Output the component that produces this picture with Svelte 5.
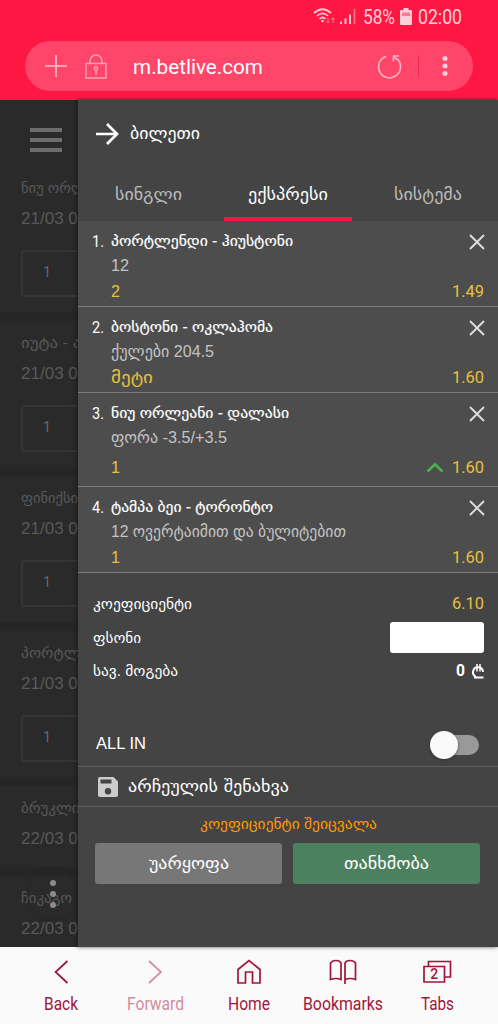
<script>
  const events = [
    { name: 'ნიუ ორლეანი', w: 95, date: '21/03 04:00', box: true },
    { name: 'იუტა - ატლანტა', w: 126, date: '21/03 05:00', box: true },
    { name: 'ფინიქსი', w: 57, date: '21/03 06:00', box: true },
    { name: 'პორტლენდი', w: 96, date: '21/03 06:30', box: true },
    { name: 'ბრუკლინი', w: 74, date: '22/03 03:30', box: false },
    { name: 'ჩიკაგო', w: 51, date: '22/03 04:00', box: false }
  ];
  const tabs = [
    { text: 'სინგლი', w: 67 },
    { text: 'ექსპრესი', w: 80, active: true },
    { text: 'სისტემა', w: 68 }
  ];
  const bets = [
    { title: 'პორტლენდი - ჰიუსტონი', w: 182, sub: '12', sw: 18, pick: '2', pw: 9, odds: '1.49' },
    { title: 'ბოსტონი - ოკლაჰომა', w: 162, sub: 'ქულები 204.5', sw: 103, pick: 'მეტი', pw: 42, odds: '1.60' },
    { title: 'ნიუ ორლეანი - დალასი', w: 178, sub: 'ფორა -3.5/+3.5', sw: 116, pick: '1', pw: 9, odds: '1.60', up: true },
    { title: 'ტამპა ბეი - ტორონტო', w: 162, sub: '12 ოვერტაიმით და ბულიტებით', sw: 235, pick: '1', pw: 9, odds: '1.60' }
  ];
</script>

{#snippet label(text, w, size, cls = '')}
  <svg class="label {cls}" width={w} height="20">
    <text x="0" y="15" font-size={size} textLength={w} lengthAdjust="spacingAndGlyphs">{text}</text>
  </svg>
{/snippet}

<div class="screen">
  <header class="browser">
    <div class="status">
      <svg class="signal" width="46" height="20" viewBox="0 0 46 20" fill="none" stroke="#ffc4cf" stroke-width="1.7">
        <path d="M1 6Q9.5-1.500 18 6M4 9Q9.500 3.800 15 9M6.500 12Q9.500 9 12.500 12" />
        <circle cx="9.500" cy="14" r="1.300" fill="#ffc4cf" stroke="none" />
        <path d="M15 11v5m-1.500-1.500 1.500 1.700 1.500-1.700M20 16v-5m-1.500 1.500 1.500-1.700 1.500 1.700" stroke="#ff7890" stroke-width="1" />
        <path d="M28 17v-2.500M32.500 17v-5.500M37 17V7.500" stroke-width="2" />
        <path d="M41.500 17V2" stroke="#ff7890" stroke-width="1.500" />
      </svg>
      {@render label('58%', 32, 20.5, 'rob')}
      <svg class="battery" width="12" height="18" viewBox="0 0 12 18" fill="#ffd0d9">
        <path d="M3.500 0h5v2H11q1 0 1 1v13q0 1-1 1H1q-1 0-1-1V3q0-1 1-1h2.500z" />
        <path d="M2 4.500h8V8H2z" fill="#ff7890" />
      </svg>
      {@render label('02:00', 44, 20.5, 'rob')}
    </div>
    <div class="address">
      <svg width="22" height="22" viewBox="0 0 22 22" stroke="#ffc4cf" stroke-width="1.600"><path d="M11 0v22M0 11h22" /></svg>
      <svg class="lock" width="22" height="25" viewBox="0 0 22 25" fill="none" stroke="#ff9fb1" stroke-width="1.500">
        <path d="M1 9.500h20v14.500H1zM5 9.500V7a6 6 0 0 1 12 0v2.500" />
        <circle cx="11" cy="14.500" r="1.700" /><path d="M11 16v5" />
      </svg>
      {@render label('m.betlive.com', 130, 21, 'rob url')}
      <svg class="reload" width="25" height="25" viewBox="0 0 25 25" fill="none" stroke="#ffb5c3" stroke-width="1.600">
        <path d="M9 2.400A11 11 0 1 0 20 4.700M22 2h-5.500v5.500M16.500 2l4 4" />
      </svg>
      <i class="split"></i>
      <svg class="more" width="6" height="22" viewBox="0 0 6 22" fill="#ffd0d9"><circle cx="3" cy="3.500" r="2.500" /><circle cx="3" cy="11" r="2.500" /><circle cx="3" cy="18.500" r="2.500" /></svg>
    </div>
  </header>

  <main>
    <aside>
      <div class="menu"><i></i><i></i><i></i></div>
      {#each events as e}
        <div class="event" class:short={!e.box}>
          {@render label(e.name, e.w, 15)}
          {@render label(e.date, 90, 16)}
          {#if e.box}<div class="box">{@render label('1', 8, 15, 'rob')}</div>{/if}
        </div>
      {/each}
      <div class="fab"><i></i><i></i><i></i></div>
    </aside>

    <section class="slip">
      <div class="title">
        <svg width="23" height="22" viewBox="0 0 23 22" fill="none" stroke="#fff" stroke-width="2.700"><path d="M0 11h21M11 1l10 10-10 10" /></svg>
        {@render label('ბილეთი', 70, 16.5, 'caps')}
      </div>
      <nav class="tabs">
        {#each tabs as t}
          <div class="tab" class:active={t.active}>{@render label(t.text, t.w, 16, 'caps')}</div>
        {/each}
      </nav>

      {#each bets as b, i}
        <article class:raised={b.up}>
          <div class="num">{@render label(`${i + 1}.`, 12, 16, 'rob')}</div>
          <div class="info">
            <div class="line top">
              {@render label(b.title, b.w, 14.5, 'strong')}
              <svg width="16" height="16" viewBox="0 0 16 16" stroke="#ddd" stroke-width="1.900"><path d="M1 1l14 14M15 1L1 15" /></svg>
            </div>
            <div class="line sub">{@render label(b.sub, b.sw, 16)}</div>
            <div class="line pick">
              {@render label(b.pick, b.pw, 16.5)}
              <span class="odds">
                {#if b.up}<svg width="18" height="11" viewBox="0 0 18 11" fill="none" stroke="#4caf50" stroke-width="2.600"><path d="M1.500 9.500L9 2.200l7.500 7.300" /></svg>{/if}
                {@render label(b.odds, 32, 16, 'rob')}
              </span>
            </div>
          </div>
        </article>
      {/each}

      <div class="totals">
        <div class="row coef">{@render label('კოეფიციენტი', 99, 14.5)}<span class="gold">{@render label('6.10', 32, 16, 'rob')}</span></div>
        <div class="row stake">{@render label('ფსონი', 48, 14.5)}<div class="input"></div></div>
        <div class="row win">
          {@render label('სავ. მოგება', 85, 14.5)}
          <span class="money">
            {@render label('0', 9, 16, 'rob bold')}
            <svg width="12" height="15" viewBox="0 0 12 15" fill="none" stroke="#fff" stroke-width="2">
              <path d="M11 8A5 5 0 1 0 4 12.800M2 13.500H11.500" /><path d="M5 0v7.500M8 0v7.500" stroke-width="1.500" />
            </svg>
          </span>
        </div>
      </div>
      <div class="allin">{@render label('ALL IN', 50, 16.5)}<div class="switch"><i></i></div></div>
      <div class="save">
        <svg width="20" height="20" viewBox="0 0 20 20"><path fill="#ccc" d="M2 0h13.500L20 4.500V18q0 2-2 2H2q-2 0-2-2V2Q0 0 2 0z" /><path fill="#444" d="M2.500 2.500h11v4h-11z" /><circle cx="10" cy="14.300" r="3.200" fill="#444" /></svg>
        {@render label('არჩეულის შენახვა', 161, 16, 'caps')}
      </div>
      <div class="notice">{@render label('კოეფიციენტი შეიცვალა', 177, 14.5)}</div>
      <div class="actions">
        <div class="btn">{@render label('უარყოფა', 80, 16, 'caps')}</div>
        <div class="btn ok">{@render label('თანხმობა', 85, 16, 'caps')}</div>
      </div>
    </section>
  </main>

  <footer>
    <div class="item">
      <svg width="30" height="26" viewBox="0 0 30 26"><path d="M21.500 2L9.500 13l12 11" /></svg>
      {@render label('Back', 34, 18, 'rob')}
    </div>
    <div class="item off">
      <svg width="30" height="26" viewBox="0 0 30 26"><path d="M9 2l12 11L9 24" /></svg>
      {@render label('Forward', 57, 18, 'rob')}
    </div>
    <div class="item">
      <svg width="30" height="26" viewBox="0 0 30 26"><path d="M4 24V10.500L15 1.500l11 9V24h-7.500V13h-7v11z" /></svg>
      {@render label('Home', 42, 18, 'rob')}
    </div>
    <div class="item">
      <svg width="30" height="26" viewBox="0 0 30 26"><path d="M13 20.500V4Q12 1.500 8 1.500T2.500 4v16.500Q8 18.500 13 20.500zM17 25V4Q18 1.500 22 1.500T27.500 4v16.500Q22 18.500 17 20.500" /></svg>
      {@render label('Bookmarks', 80, 18, 'rob')}
    </div>
    <div class="item">
      <svg width="30" height="26" viewBox="0 0 30 26"><path d="M2 7.500h20.500V23H2zM6.500 7.500V2.500H28.500V18h-6" /><text x="12.300" y="20" text-anchor="middle">2</text></svg>
      {@render label('Tabs', 33, 18, 'rob')}
    </div>
  </footer>
</div>

<style>
  :global(body) { background: #444; }
  .screen {
    width: 498px;
    height: 1024px;
    display: flex;
    flex-direction: column;
    overflow: hidden;
    color: #fff;
    font-family: "Liberation Sans", "DejaVu Sans", sans-serif;
  }
  svg { display: block; flex: none; }
  .label { overflow: visible; fill: currentColor; }
  .rob { font-family: Roboto, sans-serif; }
  .caps { font-family: "DejaVu Sans", sans-serif; text-transform: uppercase; }
  .bold { font-weight: 700; }
  .browser { height: 100px; background: #ff1744; box-sizing: border-box; flex: none; }
  .status { height: 41px; display: flex; align-items: flex-start; padding: 9px 36px 0 313px; box-sizing: border-box; color: #ffd0d9; }
  .signal { margin: -2px 4px 0 0; }
  .battery { margin: -1px 6px 0 5px; }
  .address { height: 50px; margin: 0 25px; border-radius: 25px; background: #ff4569; display: flex; align-items: center; padding: 0 25px 0 20px; }
  .lock { margin: 0 26px 0 18px; }
  .url { margin-top: 5px; color: #fff; }
  .reload { margin: 0 16px 0 auto; }
  .split { width: 1px; height: 22px; background: #f02950; margin-right: 23px; }
  main { height: 847px; display: flex; flex: none; }
  aside { position: relative; width: 78px; overflow: hidden; background: #2a2a2a; color: #595959; }
  .menu { height: 66px; padding: 28px 0 0 30px; box-sizing: border-box; display: flex; flex-direction: column; gap: 6px; }
  .menu i { width: 32px; height: 4px; background: #6d6d6d; flex: none; }
  .event { height: 155px; padding: 12px 0 0 21px; box-sizing: border-box; display: flex; flex-direction: column; border-bottom: 9px solid #262626; }
  .event.short { height: 90px; }
  .event > :global(svg + svg) { margin-top: 11px; }
  .box { margin-top: 21px; width: 80px; height: 47px; flex: none; border: 2px solid #353535; border-radius: 3px; box-sizing: border-box; padding: 10px 0 0 20px; color: #686868; }
  .fab { position: absolute; left: 28px; top: 769px; width: 50px; height: 50px; border-radius: 50%; box-shadow: 0 0 3px #222; display: flex; flex-direction: column; align-items: center; justify-content: center; gap: 5px; }
  .fab i { width: 6px; height: 6px; border-radius: 50%; background: #8b8b8b; }
  .slip { width: 420px; background: #444; position: relative; box-shadow: -1px 0 4px #111a; }
  .title { height: 68px; display: flex; align-items: center; padding-left: 18px; gap: 11px; }
  .tabs { height: 53px; display: flex; }
  .tab { flex: 1; display: flex; justify-content: center; padding-top: 17px; box-sizing: border-box; color: #bbb; }
  .tab.active { color: #fff; border-bottom: 4px solid #f0194a; margin: 0 6px; flex: 0 0 128px; }
  article { height: 86px; display: flex; background: #4d4d4d; border-bottom: 1px solid #7d7d7d; box-sizing: border-box; padding: 10px 14px 0 14px; }
  article.raised { height: 94px; }
  .num { width: 19px; padding-top: 1px; }
  .info { flex: 1; }
  .line { display: flex; justify-content: space-between; height: 25px; }
  .top svg:not(.label) { margin-top: 3px; margin-right: -1px; }
  .strong { stroke: currentColor; stroke-width: 0.2px; }
  .sub { color: #c4c4c4; height: 26px; }
  .raised .sub { height: 30px; }
  .pick, .gold { color: #e8c03c; }
  .odds { display: flex; gap: 8px; align-items: flex-start; }
  .odds svg:not(.label) { margin-top: 4px; }
  .totals { height: 147px; padding: 21px 14px 0 15px; box-sizing: border-box; }
  .row { display: flex; justify-content: space-between; align-items: center; }
  .coef { height: 20px; }
  .stake { height: 46px; padding-top: 1px; box-sizing: border-box; }
  .input { width: 94px; height: 31px; background: #fff; border-radius: 3px; }
  .win { height: 22px; }
  .money { display: flex; gap: 7px; align-items: center; }
  .allin { height: 46px; display: flex; justify-content: space-between; align-items: center; padding: 1px 19px 0 18px; box-sizing: border-box; }
  .switch { width: 44px; height: 20px; margin: 2px 0 0; border-radius: 10px; background: #999; display: flex; align-items: center; }
  .switch i { width: 28px; height: 28px; margin-left: -5px; border-radius: 50%; background: #fafafa; box-shadow: 0 1px 3px #2228; flex: none; }
  .save { height: 41px; border-top: 1px solid #606060; border-bottom: 1px solid #606060; box-sizing: border-box; display: flex; align-items: center; padding-left: 20px; gap: 10px; }
  .notice { height: 36px; padding-bottom: 3px; box-sizing: border-box; display: flex; justify-content: center; align-items: center; color: #f90; }
  .actions { display: flex; gap: 11px; padding: 0 18px 0 17px; }
  .btn { flex: 1; height: 41px; border-radius: 3px; background: #777; display: flex; align-items: center; justify-content: center; }
  .ok { background: #4b815f; }
  footer { flex: 1; background: #fafafa; display: flex; padding: 0 14px; color: #a0163b; }
  .item { width: 94px; display: flex; flex-direction: column; align-items: center; padding-top: 12px; gap: 10px; box-sizing: border-box; }
  .item svg:not(.label) { fill: none; stroke: currentColor; stroke-width: 1.7; }
  .item text { font-family: Roboto, sans-serif; }
  .item svg:not(.label) text { fill: currentColor; stroke: none; font-size: 14px; font-weight: 500; }
  .off { color: #d18b9e; }
</style>
